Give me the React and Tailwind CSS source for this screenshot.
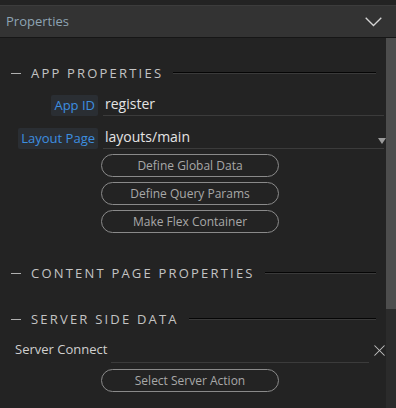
import { X } from "lucide-react";

function SectionTitle({ children }) {
	return (
		<div className="flex items-center h-[20px] pl-[11px] pr-[10px]">
			<div className="w-[10px] h-px bg-[#b0b0b0]" />
			<span className="ml-[10px] mr-[10px] text-[13px] tracking-[2.2px] text-[#c4c4c4] font-medium whitespace-nowrap leading-none">
				{children}
			</span>
			<div className="flex-1 h-[2px] bg-[#050505] border-b border-[#3a3a3a]" />
		</div>
	);
}

function PillButton({ children }) {
	return (
		<button className="w-[178px] h-[23px] rounded-full border border-[#8a8a8a] text-[12px] text-[#a8a8a8] leading-none flex items-center justify-center">
			{children}
		</button>
	);
}

function FieldRow({ label, value, dropdown }) {
	return (
		<div className="flex items-end h-[24px]">
			<div className="w-[98px] flex justify-end">
				<span className="bg-[#2a2e33] text-[#3d8fe0] text-[13px] px-[3px] h-[21px] flex items-center rounded-[2px]">
					{label}
				</span>
			</div>
			<div className="ml-[5px] flex-1 mr-[2px] h-[24px] border-b border-[#3b3b3b] flex items-center relative">
				<span className="ml-[2px] text-[14px] text-[#e4e4e4]">{value}</span>
				{dropdown && (
					<span className="absolute right-[-2px] top-[13px] w-0 h-0 border-l-[4px] border-r-[4px] border-t-[6px] border-l-transparent border-r-transparent border-t-[#9a9a9a]" />
				)}
			</div>
		</div>
	);
}

export default function App() {
	return (
		<div
			className="w-[396px] h-[408px] bg-[#232323] overflow-hidden flex flex-col"
			style={{ fontFamily: '"Open Sans", "Noto Sans", sans-serif' }}>
			<div className="h-[5px] shrink-0" />
			<div className="h-[33px] shrink-0 bg-[#333333] border-t border-[#3c3c3c] border-b border-b-[#161616] flex items-center justify-between pl-[6px] pr-[14px]">
				<span className="text-[13px] text-[#8ea4b3]">Properties</span>
				<svg width="17" height="10" viewBox="0 0 17 10" fill="none">
					<path d="M0.7 0.7 L8.5 8.5 L16.3 0.7" stroke="#d4d4d4" strokeWidth="1.3" />
				</svg>
			</div>
			<div className="flex flex-1">
				<div className="flex-1 flex flex-col">
					<div className="pt-[25px]">
						<SectionTitle>APP PROPERTIES</SectionTitle>
					</div>
					<div className="mt-[9px]">
						<FieldRow label="App ID" value="register" />
					</div>
					<div className="mt-[9px]">
						<FieldRow label="Layout Page" value="layouts/main" dropdown />
					</div>
					<div className="flex flex-col gap-[5px] mt-[5px] pl-[101px]">
						<PillButton>Define Global Data</PillButton>
						<PillButton>Define Query Params</PillButton>
						<PillButton>Make Flex Container</PillButton>
					</div>
					<div className="mt-[30px]">
						<SectionTitle>CONTENT PAGE PROPERTIES</SectionTitle>
					</div>
					<div className="mt-[26px]">
						<SectionTitle>SERVER SIDE DATA</SectionTitle>
					</div>
					<div className="flex items-end h-[24px] mt-[10px] relative">
						<span className="pl-[15px] w-[111px] text-[13px] text-[#cfcfcf] pb-[4px]">
							Server Connect
						</span>
						<div className="flex-1 h-[24px] mr-[17px] border-b border-[#3b3b3b]" />
						<X className="absolute right-[-3px] top-[2px] w-[19px] h-[19px] text-[#c4c4c4]" strokeWidth={1.3} />
					</div>
					<div className="mt-[6px] pl-[101px]">
						<PillButton>Select Server Action</PillButton>
					</div>
				</div>
				<div className="w-[10px] flex flex-col bg-[#2b2b2b]">
					<div className="h-[271px] bg-[#4d4d4d]" />
				</div>
			</div>
		</div>
	);
}
